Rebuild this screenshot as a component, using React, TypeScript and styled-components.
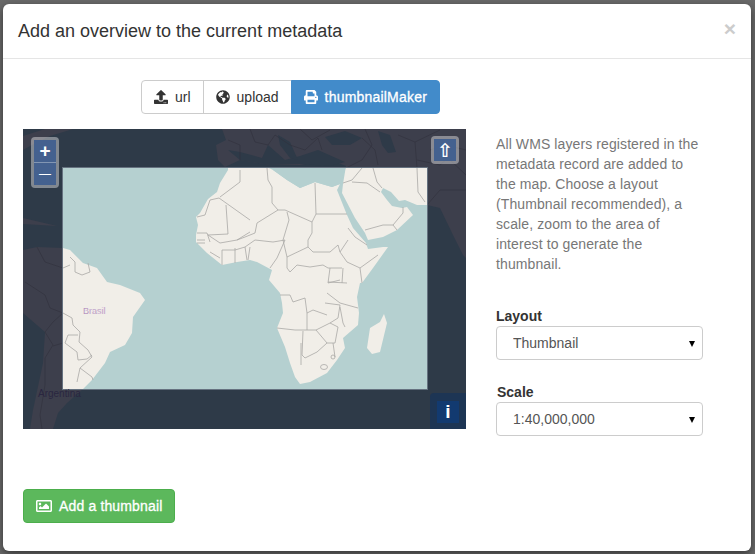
import styled, { createGlobalStyle } from "styled-components";
import { FaUpload, FaGlobeAmericas, FaPrint, FaRegImage } from "react-icons/fa";

const africa =
  "228,170 220,183 217,192 208,199 200,213 196,217 198,225 196,235 196,242 207,253 222,265 237,262 250,260 257,262 272,270 269,280 280,293 282,303 283,313 277,328 285,347 290,363 295,377 300,384 310,382 327,373 337,360 345,348 343,338 358,325 359,313 357,297 360,283 362,283 373,268 388,247 383,247 368,249 366,243 353,228 347,215 337,190 340,184 332,187 315,182 300,188 287,180 273,170 267,167 228,167";

const eurasia =
  "343,184 346,166 330,160 300,165 270,165 240,160 225,167 218,160 216,145 226,140 222,129 466,129 466,258 463,255 453,235 440,208 427,205 417,205 405,200 399,201 391,192 383,188 381,192 387,200 392,206 402,208 407,207 413,215 397,230 383,237 368,240 365,233 355,218 342,193";

const southAmerica =
  "23,250 37,247 63,248 70,250 83,263 97,268 107,282 120,285 140,293 145,300 133,317 132,333 125,345 110,352 105,363 92,380 83,389 67,403 58,413 53,429 30,429 33,410 43,363 45,332 23,313";

const madagascar = "384,314 387,323 380,352 372,354 367,348 370,328 380,322";

const darkSeas = [
  "228,150 240,152 262,158 268,145 285,160 300,156 318,150 345,162 330,166 300,164 270,165 240,160",
  "278,135 290,142 298,160 290,158 280,145",
  "325,137 345,131 362,138 350,145 332,145",
  "378,131 390,135 396,152 388,153 382,145",
];

const lightBorders = [
  "240,170 240,182 220,197",
  "219,198 210,200 205,215 197,217",
  "219,198 250,220",
  "226,205 228,234 208,235",
  "197,233 207,233 210,242",
  "197,240 205,240",
  "197,243 205,243",
  "208,235 220,243 237,240 250,232",
  "210,252 220,258",
  "222,250 235,250 245,247 255,240",
  "235,248 235,263",
  "245,247 247,260",
  "250,247 248,260",
  "222,250 222,265",
  "267,168 268,180 272,187 272,203 278,210 257,223 255,233 245,237 237,240",
  "315,183 316,214 347,214",
  "278,210 285,210 312,222 316,214",
  "312,222 312,233 308,240 308,247 313,252",
  "287,212 289,220 283,240",
  "255,240 273,242 285,240 277,258 270,268",
  "283,240 287,257 287,268 290,272",
  "287,257 308,247",
  "313,252 330,252 338,245 340,252 348,240",
  "348,228 355,237 367,245",
  "340,252 347,262 360,268 378,255",
  "290,272 297,265 310,267 323,265 328,268 342,268",
  "360,268 362,283",
  "330,268 328,283",
  "343,268 342,283",
  "328,282 347,283",
  "328,283 340,280",
  "327,293 340,303 358,308",
  "280,295 290,295 293,302 305,298 307,313 313,310 327,315",
  "325,303 340,305 338,318 330,323 316,330",
  "277,328 295,330 307,330 316,330",
  "307,313 307,330",
  "340,307 343,323 345,327",
  "316,330 327,343 335,343 338,327 330,323",
  "303,331 302,355 305,358 317,352 327,343",
  "301,343 301,365",
  "333,343 335,357",
  "352,182 367,183 380,192",
  "362,168 352,180 343,183",
  "373,168 377,182 382,188",
  "365,230 383,225 393,225 397,230",
  "393,225 403,213 403,207",
  "417,168 418,192 425,202",
  "63,313 72,318 73,325 80,332 79,342 88,350 92,357 80,368 92,377 93,380",
  "65,343 68,335 78,335",
  "65,343 77,352 78,360 87,359 92,355",
  "80,368 77,382",
  "70,257 75,262 75,272 82,275 90,272 88,263",
  "63,268 70,265",
];

const darkBorders = [
  "63,313 50,308 45,295 25,282",
  "63,313 53,322 45,332 53,345 45,358 45,385 40,415 42,429",
  "63,343 53,346",
  "37,247 45,262 63,268",
  "228,140 240,145 240,160",
  "250,129 255,142 268,145 275,135 290,145 305,150 318,138 322,150",
  "300,129 312,140 330,130",
  "365,129 372,145 362,160 346,168",
  "362,138 375,150 378,165",
  "398,135 415,142 417,168",
  "415,142 440,130",
  "417,160 440,165 448,158 466,175",
  "427,205 440,190 466,190",
  "430,150 445,145 466,150",
];

const GlobalStyle = createGlobalStyle`
  html, body {
    margin: 0;
    height: 100%;
    background: #6a6a6a;
    font-family: "Liberation Sans", Arial, sans-serif;
  }
`;

const Backdrop = styled.div`
  width: 755px;
  height: 554px;
  padding: 4px 4px 3px 3px;
  box-sizing: border-box;
  background: #6a6a6a;
  overflow: hidden;
`;

const Modal = styled.div`
  height: 547px;
  background: #fff;
  border-radius: 6px;
  box-shadow: 0 3px 9px rgba(0, 0, 0, 0.5);
`;

const Header = styled.div`
  height: 55px;
  box-sizing: border-box;
  padding: 0 15px;
  display: flex;
  align-items: center;
  justify-content: space-between;
  border-bottom: 1px solid #e5e5e5;
`;

const Title = styled.h4`
  margin: 0;
  font-size: 18px;
  font-weight: 400;
  color: #333;
`;

const Close = styled.span`
  font-size: 21px;
  font-weight: 700;
  line-height: 1;
  color: #ccc;
  margin-top: -6px;
`;

const Body = styled.div`
  padding: 21px 20px 0;
`;

const TabGroup = styled.div`
  display: flex;
  width: max-content;
  margin: 0 0 15px 118px;
`;

const Tab = styled.button<{ $active?: boolean }>`
  display: flex;
  align-items: center;
  gap: 7px;
  height: 34px;
  box-sizing: border-box;
  padding: 0 12px;
  font-family: inherit;
  font-size: 14px;
  font-weight: 400;
  letter-spacing: ${(p) => (p.$active ? "0.2px" : "0")};
  color: ${(p) => (p.$active ? "#fff" : "#333")};
  -webkit-text-stroke: ${(p) => (p.$active ? "0.3px #fff" : "0")};
  background: ${(p) => (p.$active ? "#428bca" : "#fff")};
  border: 1px solid ${(p) => (p.$active ? "#428bca" : "#ccc")};
  margin-left: -1px;
  &:first-child {
    margin-left: 0;
    border-radius: 4px 0 0 4px;
  }
  &:last-child {
    border-radius: 0 4px 4px 0;
  }
  svg {
    font-size: 14px;
  }
`;

const Columns = styled.div`
  display: flex;
  gap: 30px;
`;

const MapFrame = styled.div`
  position: relative;
  width: 443px;
  height: 300px;
  flex: none;
  svg {
    display: block;
  }
`;

const ControlBox = styled.div`
  position: absolute;
  padding: 3px;
  background: rgba(255, 255, 255, 0.4);
  border-radius: 4px;
`;

const ZoomBox = styled(ControlBox)`
  left: 8px;
  top: 8px;
`;

const RotateBox = styled(ControlBox)`
  right: 7px;
  top: 7px;
`;

const InfoBox = styled(ControlBox)`
  right: 0;
  bottom: 0;
  padding: 8px 7px 6px;
  background: #1d3554;
  border-radius: 4px 0 0 0;
`;

const MapButton = styled.div<{ $dark?: boolean }>`
  width: 22px;
  height: 22px;
  display: flex;
  align-items: center;
  justify-content: center;
  color: #fff;
  font-weight: 700;
  font-size: 19px;
  background: ${(p) => (p.$dark ? "#123a70" : "#44618f")};
  & + & {
    border-top: 1px solid #8296b3;
  }
`;

const Minus = styled.span`
  font-size: 12px;
  font-weight: 400;
`;

const Glyph = styled.span`
  font-family: "DejaVu Sans", sans-serif;
  font-weight: 700;
  font-size: 19px;
`;

const Side = styled.div`
  width: 207px;
  padding-top: 5px;
`;

const Help = styled.p`
  margin: 0 0 33px;
  font-size: 14px;
  line-height: 20px;
  letter-spacing: 0.1px;
  color: #777;
`;

const FieldLabel = styled.label<{ $shift?: number }>`
  display: block;
  margin: 0 0 1px ${(p) => p.$shift ?? 0}px;
  font-size: 14px;
  line-height: 18px;
  font-weight: 700;
  color: #333;
`;

const SelectWrap = styled.div`
  position: relative;
  margin-bottom: 23px;
  &::after {
    content: "";
    position: absolute;
    right: 8px;
    top: 15px;
    border-left: 3px solid transparent;
    border-right: 3px solid transparent;
    border-top: 6px solid #000;
  }
`;

const Select = styled.select`
  display: block;
  width: 207px;
  height: 34px;
  box-sizing: border-box;
  padding: 0 16px;
  appearance: none;
  background: #fff;
  border: 1px solid #ccc;
  border-radius: 4px;
  font-family: inherit;
  font-size: 14px;
  color: #555;
`;

const AddButton = styled.button`
  display: flex;
  align-items: center;
  gap: 7px;
  height: 34px;
  margin-top: 30px;
  padding: 0 12px;
  box-sizing: border-box;
  background: #5cb85c;
  border: 1px solid #4cae4c;
  border-radius: 4px;
  color: #fff;
  -webkit-text-stroke: 0.3px #fff;
  letter-spacing: 0.15px;
  font-family: inherit;
  font-size: 14px;
  font-weight: 400;
  svg {
    font-size: 16px;
  }
`;

const WorldMap = () => (
  <svg width="443" height="300" viewBox="23 129 443 300">
    <defs>
      <clipPath id="page">
        <rect x="63" y="168" width="364" height="221" />
      </clipPath>
    </defs>
    <rect x="23" y="129" width="443" height="300" fill="#2e3a48" />
    <g fill="#3d3f4c">
      <polygon points={eurasia} />
      <polygon points={southAmerica} />
      <polygon points="23,218 40,222 57,226 40,225 23,224" />
      <polygon points="23,136 45,129 73,129 50,136 30,146 23,150" />
    </g>
    <g fill="#2e3a48">
      {darkSeas.map((p) => (
        <polygon key={p} points={p} />
      ))}
    </g>
    <g fill="none" stroke="#30313d" strokeWidth="0.6">
      {darkBorders.map((p) => (
        <polyline key={p} points={p} />
      ))}
    </g>
    <rect x="62.5" y="167.5" width="365" height="222" fill="#b5d0d0" stroke="#667280" strokeWidth="1" />
    <g clipPath="url(#page)">
      <g fill="#f1eee8">
        <polygon points={africa} />
        <polygon points={eurasia} />
        <polygon points={southAmerica} />
        <polygon points={madagascar} />
      </g>
      <polygon points="273,170 287,180 300,188 315,182 332,187 340,184 343,175 346,167 273,167" fill="#b5d0d0" />
      <g fill="none" stroke="#a9a8a6" strokeWidth="0.8">
        {lightBorders.map((p) => (
          <polyline key={p} points={p} />
        ))}
        <circle cx="333" cy="357" r="2" />
        <ellipse cx="324" cy="367" rx="3.5" ry="2.5" />
      </g>
      <text x="83" y="314" fontSize="9" fill="#9a6aa6" stroke="#fff" strokeWidth="0.2" fontFamily="Liberation Sans">
        Brasil
      </text>
    </g>
    <text x="38" y="397" fontSize="10" fill="#2a2640" fontFamily="Liberation Sans">
      Argentina
    </text>
  </svg>
);

const App = () => (
  <>
    <GlobalStyle />
    <Backdrop>
      <Modal>
        <Header>
          <Title>Add an overview to the current metadata</Title>
          <Close>×</Close>
        </Header>
        <Body>
          <TabGroup>
            <Tab>
              <FaUpload />
              url
            </Tab>
            <Tab>
              <FaGlobeAmericas />
              upload
            </Tab>
            <Tab $active>
              <FaPrint />
              thumbnailMaker
            </Tab>
          </TabGroup>
          <Columns>
            <MapFrame>
              <WorldMap />
              <ZoomBox>
                <MapButton>+</MapButton>
                <MapButton>
                  <Minus>—</Minus>
                </MapButton>
              </ZoomBox>
              <RotateBox>
                <MapButton>
                  <Glyph>⇧</Glyph>
                </MapButton>
              </RotateBox>
              <InfoBox>
                <MapButton $dark>i</MapButton>
              </InfoBox>
            </MapFrame>
            <Side>
              <Help>
                All WMS layers registered in the metadata record are added to
                the map. Choose a layout (Thumbnail recommended), a scale, zoom
                to the area of interest to generate the thumbnail.
              </Help>
              <FieldLabel>Layout</FieldLabel>
              <SelectWrap>
                <Select defaultValue="Thumbnail">
                  <option>Thumbnail</option>
                </Select>
              </SelectWrap>
              <FieldLabel $shift={1}>Scale</FieldLabel>
              <SelectWrap>
                <Select defaultValue="1:40,000,000">
                  <option>1:40,000,000</option>
                </Select>
              </SelectWrap>
            </Side>
          </Columns>
          <AddButton>
            <FaRegImage />
            Add a thumbnail
          </AddButton>
        </Body>
      </Modal>
    </Backdrop>
  </>
);

export default App;
